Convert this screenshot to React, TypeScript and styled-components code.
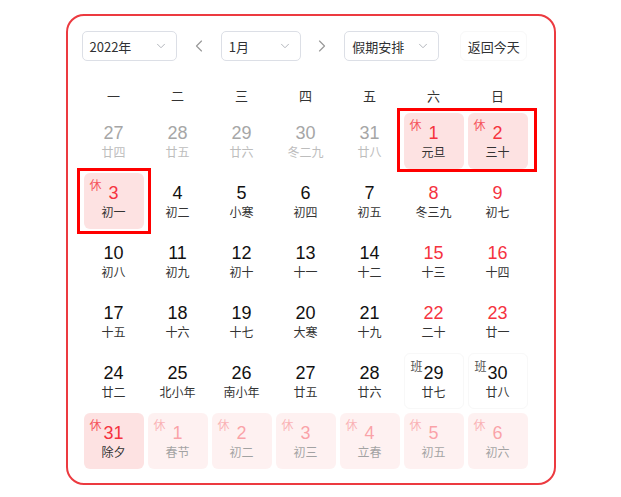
import React from 'react';
import styled, { createGlobalStyle, css } from 'styled-components';
import { ChevronDown, ChevronLeft, ChevronRight } from 'lucide-react';

const GlobalStyle = createGlobalStyle`
  html, body {
    margin: 0;
    padding: 0;
    background: #fff;
    font-family: "Microsoft YaHei", "Noto Sans CJK SC", "Liberation Sans", sans-serif;
  }
`;

const Page = styled.div`
  display: flex;
  justify-content: center;
  padding-top: 14px;
`;

const Panel = styled.div`
  box-sizing: border-box;
  width: 490px;
  height: 471px;
  border: 2px solid #ec3a40;
  border-radius: 18px;
  padding: 15px 26px 0 16px;
`;

const Toolbar = styled.div`
  display: flex;
  align-items: center;
  height: 30px;
  margin-left: -2px;
`;

const Select = styled.div<{ $w: number }>`
  box-sizing: border-box;
  width: ${p => p.$w}px;
  height: 30px;
  border: 1px solid #dcdfe6;
  border-radius: 5px;
  display: flex;
  align-items: center;
  justify-content: space-between;
  padding: 0 8px 0 7px;
  font-size: 13px;
  color: #303133;
  svg { color: #a8abb2; }
`;

const Arrow = styled.div`
  width: 44px;
  display: flex;
  justify-content: center;
  color: #999;
`;

const TodayButton = styled.div`
  margin-left: 21px;
  box-sizing: border-box;
  width: 68px;
  height: 30px;
  border: 1px solid #f8f8f8;
  border-radius: 6px;
  display: flex;
  align-items: center;
  justify-content: center;
  font-size: 13px;
  color: #303133;
`;

const WeekRow = styled.div`
  display: grid;
  grid-template-columns: repeat(7, 60px);
  column-gap: 4px;
  margin-top: 16px;
  height: 36px;
  align-items: center;
`;

const WeekDay = styled.div`
  text-align: center;
  font-size: 13px;
  color: #333;
`;

const Grid = styled.div`
  position: relative;
  display: grid;
  grid-template-columns: repeat(7, 60px);
  grid-auto-rows: 56px;
  gap: 4px;
`;

type Kind = 'prev' | 'cur' | 'next';

const Cell = styled.div<{ $rest: boolean; $work: boolean; $kind: Kind }>`
  position: relative;
  box-sizing: border-box;
  border-radius: 6px;
  display: flex;
  flex-direction: column;
  align-items: center;
  padding-top: 8px;
  ${p => p.$rest && css`background: #fde2e2;`}
  ${p => p.$work && css`border: 1px solid #f8f8f8; padding-top: 7px;`}
  ${p => p.$kind === 'next' && css`opacity: 0.45;`}
`;

const Num = styled.div<{ $tone: 'grey' | 'red' | 'black' }>`
  font-family: "Liberation Sans", Arial, sans-serif;
  font-size: 18px;
  line-height: 24px;
  color: ${p => (p.$tone === 'grey' ? '#a6a6a6' : p.$tone === 'red' ? '#f5333f' : '#111')};
`;

const Lunar = styled.div<{ $grey: boolean }>`
  font-size: 12px;
  line-height: 14px;
  color: ${p => (p.$grey ? '#bdbdbd' : '#333')};
`;

const Tag = styled.span<{ $rest: boolean }>`
  position: absolute;
  left: 6px;
  top: 5px;
  font-size: 12px;
  line-height: 14px;
  color: ${p => (p.$rest ? '#f5545c' : '#555')};
`;

const Mark = styled.div`
  position: absolute;
  box-sizing: border-box;
  border: 3px solid #ff0000;
  pointer-events: none;
`;

type Day = { d: number; l: string; k: Kind; rest?: boolean; work?: boolean; red?: boolean };

const days: Day[] = [
  { d: 27, l: '廿四', k: 'prev' },
  { d: 28, l: '廿五', k: 'prev' },
  { d: 29, l: '廿六', k: 'prev' },
  { d: 30, l: '冬二九', k: 'prev' },
  { d: 31, l: '廿八', k: 'prev' },
  { d: 1, l: '元旦', k: 'cur', rest: true },
  { d: 2, l: '三十', k: 'cur', rest: true },
  { d: 3, l: '初一', k: 'cur', rest: true },
  { d: 4, l: '初二', k: 'cur' },
  { d: 5, l: '小寒', k: 'cur' },
  { d: 6, l: '初四', k: 'cur' },
  { d: 7, l: '初五', k: 'cur' },
  { d: 8, l: '冬三九', k: 'cur', red: true },
  { d: 9, l: '初七', k: 'cur', red: true },
  { d: 10, l: '初八', k: 'cur' },
  { d: 11, l: '初九', k: 'cur' },
  { d: 12, l: '初十', k: 'cur' },
  { d: 13, l: '十一', k: 'cur' },
  { d: 14, l: '十二', k: 'cur' },
  { d: 15, l: '十三', k: 'cur', red: true },
  { d: 16, l: '十四', k: 'cur', red: true },
  { d: 17, l: '十五', k: 'cur' },
  { d: 18, l: '十六', k: 'cur' },
  { d: 19, l: '十七', k: 'cur' },
  { d: 20, l: '大寒', k: 'cur' },
  { d: 21, l: '十九', k: 'cur' },
  { d: 22, l: '二十', k: 'cur', red: true },
  { d: 23, l: '廿一', k: 'cur', red: true },
  { d: 24, l: '廿二', k: 'cur' },
  { d: 25, l: '北小年', k: 'cur' },
  { d: 26, l: '南小年', k: 'cur' },
  { d: 27, l: '廿五', k: 'cur' },
  { d: 28, l: '廿六', k: 'cur' },
  { d: 29, l: '廿七', k: 'cur', work: true },
  { d: 30, l: '廿八', k: 'cur', work: true },
  { d: 31, l: '除夕', k: 'cur', rest: true },
  { d: 1, l: '春节', k: 'next', rest: true },
  { d: 2, l: '初二', k: 'next', rest: true },
  { d: 3, l: '初三', k: 'next', rest: true },
  { d: 4, l: '立春', k: 'next', rest: true },
  { d: 5, l: '初五', k: 'next', rest: true },
  { d: 6, l: '初六', k: 'next', rest: true },
];

const weekNames = ['一', '二', '三', '四', '五', '六', '日'];

function DayCell({ day }: { day: Day }) {
  const tone = day.k === 'prev' ? 'grey' : day.rest || day.red ? 'red' : 'black';
  return (
    <Cell $rest={!!day.rest} $work={!!day.work} $kind={day.k}>
      {day.rest && <Tag $rest>休</Tag>}
      {day.work && <Tag $rest={false}>班</Tag>}
      <Num $tone={tone}>{day.d}</Num>
      <Lunar $grey={day.k === 'prev'}>{day.l}</Lunar>
    </Cell>
  );
}

export default function App() {
  return (
    <>
      <GlobalStyle />
      <Page>
        <Panel>
          <Toolbar>
            <Select $w={96}>
              <span>2022年</span>
              <ChevronDown size={14} strokeWidth={1.5} />
            </Select>
            <Arrow>
              <ChevronLeft size={20} strokeWidth={1.4} />
            </Arrow>
            <Select $w={80}>
              <span>1月</span>
              <ChevronDown size={14} strokeWidth={1.5} />
            </Select>
            <Arrow>
              <ChevronRight size={20} strokeWidth={1.4} />
            </Arrow>
            <Select $w={95}>
              <span>假期安排</span>
              <ChevronDown size={14} strokeWidth={1.5} />
            </Select>
            <TodayButton>返回今天</TodayButton>
          </Toolbar>
          <WeekRow>
            {weekNames.map(w => (
              <WeekDay key={w}>{w}</WeekDay>
            ))}
          </WeekRow>
          <Grid>
            {days.map((day, i) => (
              <DayCell key={i} day={day} />
            ))}
            <Mark style={{ left: 313, top: -5, width: 140, height: 64 }} />
            <Mark style={{ left: -7, top: 55, width: 74, height: 66 }} />
          </Grid>
        </Panel>
      </Page>
    </>
  );
}
